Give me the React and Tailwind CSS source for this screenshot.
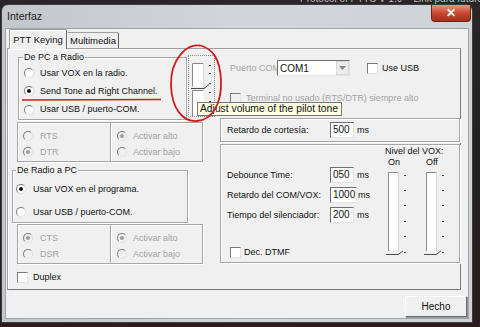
import React from "react";

const etched = "border border-[#a6a6a6] shadow-[inset_1px_1px_0_#ffffff,1px_1px_0_#ffffff]";

function Radio({ checked, disabled }) {
  return (
    <span
      className={
        "flex h-[10px] w-[10px] shrink-0 items-center justify-center rounded-full border border-b-[#e2e2e2] border-l-[#7d7d7d] border-r-[#e2e2e2] border-t-[#7d7d7d] " +
        (disabled ? "bg-[#f0f0f0]" : "bg-white")
      }
    >
      {checked ? (
        <span className={"h-[4px] w-[4px] rounded-full " + (disabled ? "bg-[#9d9d9d]" : "bg-[#111111]")} />
      ) : null}
    </span>
  );
}

function Check({ disabled }) {
  return (
    <span
      className={
        "block h-[11px] w-[11px] shrink-0 border border-b-[#e2e2e2] border-l-[#7a7a7a] border-r-[#e2e2e2] border-t-[#7a7a7a] " +
        (disabled ? "bg-[#f0f0f0]" : "bg-white")
      }
    />
  );
}

function Field({ value, w }) {
  return (
    <div
      className={
        "flex h-[16px] shrink-0 items-center border border-b-[#e3e3e3] border-l-[#6f6f6f] border-r-[#e3e3e3] border-t-[#6f6f6f] bg-white pl-[2px] text-[10px] leading-[12px] text-[#111111] " +
        (w === 27 ? "w-[27px]" : "w-[24px]")
      }
    >
      {value}
    </div>
  );
}

function SubBoxes({ a, b, aChecked }) {
  return (
    <div className="ml-[9px] flex">
      <div className={"flex h-[40px] w-[94px] flex-col pl-[5px] pt-[5px] " + etched}>
        <div className="flex h-[16px] items-center gap-[7px] text-[#a3a3a3]">
          <Radio disabled checked={aChecked === 0} />
          <span>{a}</span>
        </div>
        <div className="flex h-[16px] items-center gap-[7px] text-[#a3a3a3]">
          <Radio disabled checked={aChecked === 1} />
          <span>{b}</span>
        </div>
      </div>
      <div className={"-ml-[1px] flex h-[40px] w-[93px] flex-col pl-[6px] pt-[5px] " + etched}>
        <div className="flex h-[16px] items-center gap-[6px] text-[#a3a3a3]">
          <Radio disabled checked />
          <span>Activar alto</span>
        </div>
        <div className="flex h-[16px] items-center gap-[6px] text-[#a3a3a3]">
          <Radio disabled />
          <span>Activar bajo</span>
        </div>
      </div>
    </div>
  );
}

function PilotSlider() {
  return (
    <svg width="25" height="60" viewBox="0 0 25 60">
      <rect x="3.5" y="7.5" width="11" height="23" fill="#ffffff" />
      <path d="M3.5 30.5 V7.5 H14.5" stroke="#8a8a8a" fill="none" />
      <path d="M14.5 7.5 V30.5" stroke="#d4d4d4" fill="none" />
      <rect x="3.5" y="34.5" width="11" height="25" fill="#ffffff" />
      <path d="M3.5 60 V34.5 H14.5" stroke="#8a8a8a" fill="none" />
      <path d="M2 32.5 H15 L20 28.5" stroke="#4a4a4a" fill="none" />
      {[9, 17, 27, 36, 45, 54].map((y) => (
        <rect key={y} x="20" y={y} width="2" height="1" fill="#444444" />
      ))}
    </svg>
  );
}

function VoxSliders() {
  return (
    <svg width="64" height="90" viewBox="0 0 64 90">
      {[0, 38].map((o) => (
        <g key={o} transform={`translate(${o} 0)`}>
          <rect x="4.5" y="4.5" width="10" height="78" fill="#ffffff" />
          <path d="M4.5 83 V4.5 H14.5" stroke="#8c8c8c" fill="none" />
          <path d="M14.5 4.5 V83" stroke="#d4d4d4" fill="none" />
          <path d="M2 86.5 H14 L19 83" stroke="#4a4a4a" fill="none" />
          {[7, 22, 37, 53, 68, 84].map((y) => (
            <rect key={y} x="20" y={y} width="2" height="1" fill="#444444" />
          ))}
        </g>
      ))}
    </svg>
  );
}

export default function App() {
  return (
    <div className="relative h-[327px] w-[480px] overflow-hidden bg-gradient-to-b from-[#2a2526] via-[#222021] to-[#2c1c1c] font-['Liberation_Sans',Arial,sans-serif] text-[9px] leading-[11px] text-[#111111]">
      <div className="h-[4px] overflow-hidden pl-[300px]">
        <div className="-mt-[6px] whitespace-nowrap text-[10px] leading-[10px] text-[#bdbdbd]">
          Protocol of PTTS V 1.0&nbsp;&nbsp;&nbsp; Link para futuro/
        </div>
      </div>

      {/* window */}
      <div className="ml-[1px] flex w-[472px] flex-col rounded-t-[7px] border border-[#3a3d41] bg-gradient-to-r from-[#c3c7cb] via-[#d2d5d9] to-[#cfd3d7]">
        <div className="flex h-[23px] items-start justify-between">
          <span className="ml-[5px] mt-[5px] text-[10.5px] leading-[13px] text-[#1b1b1b]">Interfaz</span>
          <div className="mr-[1px] flex h-[17px] w-[40px] items-center justify-center rounded-b-[4px] border border-t-0 border-[#6b2419] bg-gradient-to-b from-[#e49580] via-[#c9472d] to-[#a3301d] text-[12px] font-bold leading-[12px] text-white">
            ✕
          </div>
        </div>

        {/* client */}
        <div className="mx-[3px] mb-[3px] flex h-[291px] flex-col border border-[#9ea4aa] bg-[#f0f0f0]">
          {/* tab strip */}
          <div className="relative z-10 flex h-[19px] items-end pl-[3px]">
            <div className="-mb-[1px] flex h-[20px] w-[58px] items-center justify-center rounded-t-[2px] border border-b-0 border-l-[#a0a0a0] border-r-[#5e5e5e] border-t-[#a0a0a0] bg-[#f0f0f0] pb-[1px] text-[9.5px] shadow-[inset_1px_1px_0_#ffffff]">
              PTT Keying
            </div>
            <div className="flex h-[16px] w-[52px] items-center justify-center rounded-t-[2px] border border-b-0 border-l-[#ffffff] border-r-[#5e5e5e] border-t-[#a0a0a0] text-[9.5px]">
              Multimedia
            </div>
          </div>

          {/* tab panel */}
          <div className="ml-[1px] flex h-[242px] w-[454px] border border-b-[#7a7a7a] border-l-[#a0a0a0] border-r-[#7a7a7a] border-t-[#a0a0a0] shadow-[inset_1px_1px_0_#ffffff]">
            {/* left column */}
            <div className="flex w-[212px] flex-col">
              <div className="flex items-start">
                <fieldset className={"ml-[10px] mt-[3px] h-[68px] w-[169px] " + etched}>
                  <legend className="ml-[4px] px-[1px] leading-[10px]">De PC a Radio</legend>
                  <div className="mt-[2px] flex flex-col pl-[5px]">
                    <div className="flex h-[18px] items-center gap-[6px]">
                      <Radio />
                      <span>Usar VOX en la radio.</span>
                    </div>
                    <div className="flex h-[18px] items-center gap-[6px]">
                      <Radio checked />
                      <span>Send Tone ad Right Channel.</span>
                    </div>
                    <div className="flex h-[19px] items-center gap-[6px]">
                      <Radio />
                      <span>Usar USB / puerto-COM.</span>
                    </div>
                  </div>
                </fieldset>
                <div className="ml-[1px] mt-[6px] h-[62px] w-[27px] border border-dotted border-[#8a8a8a]">
                  <PilotSlider />
                </div>
              </div>

              <div className="mt-[2px]">
                <SubBoxes a="RTS" b="DTR" aChecked={1} />
              </div>

              <fieldset className={"ml-[4px] mt-[3px] h-[58px] w-[176px] " + etched}>
                <legend className="ml-[3px] px-[1px] leading-[10px]">De Radio a PC</legend>
                <div className="mt-[5px] flex flex-col gap-[5px] pl-[3px]">
                  <div className="flex h-[18px] items-center gap-[7px]">
                    <Radio checked />
                    <span>Usar VOX en el programa.</span>
                  </div>
                  <div className="flex h-[18px] items-center gap-[7px]">
                    <Radio />
                    <span>Usar USB / puerto-COM.</span>
                  </div>
                </div>
              </fieldset>

              <div className="mt-[1px]">
                <SubBoxes a="CTS" b="DSR" aChecked={0} />
              </div>

              <div className="ml-[9px] mt-[8px] flex h-[11px] items-center gap-[5px]">
                <Check />
                <span>Duplex</span>
              </div>
            </div>

            {/* right column */}
            <div className="flex w-[240px] flex-col">
              <div className="mt-[11px] flex h-[16px] items-center">
                <span className="ml-[10px] w-[47px] whitespace-nowrap text-[#a3a3a3]">Puerto COM</span>
                <div className="relative flex h-[16px] w-[73px] items-center justify-between border border-b-[#e3e3e3] border-l-[#707070] border-r-[#e3e3e3] border-t-[#707070] bg-white pl-[2px] text-[10px]">
                  <span>COM1</span>
                  <div className="flex h-[14px] w-[13px] items-center justify-center border border-[#d8d8d8] bg-[#ececec]">
                    <svg width="7" height="4" viewBox="0 0 7 4">
                      <path d="M0 0 H7 L3.5 4 Z" fill="#8a8a8a" />
                    </svg>
                  </div>
                </div>
                <div className="ml-[17px]">
                  <Check />
                </div>
                <span className="ml-[4px]">Use USB</span>
              </div>

              <div className="ml-[10px] mt-[17px] flex h-[11px] items-center gap-[5px]">
                <Check disabled />
                <span className="whitespace-nowrap text-[#a3a3a3]">Terminal no usado (RTS/DTR) siempre alto</span>
              </div>

              <div className={"mt-[14px] flex h-[24px] items-center pl-[6px] " + etched}>
                <span className="w-[103px]">Retardo de cortesía:</span>
                <Field value="500" />
                <span className="ml-[3px]">ms</span>
              </div>

              <div className={"mt-[2px] flex h-[119px] " + etched}>
                <div className="flex w-[164px] flex-col pl-[6px] pt-[22px]">
                  <div className="flex h-[16px] items-center">
                    <span className="w-[103px]">Debounce Time:</span>
                    <Field value="050" />
                    <span className="ml-[3px]">ms</span>
                  </div>
                  <div className="mt-[4px] flex h-[16px] items-center">
                    <span className="w-[103px]">Retardo del COM/VOX:</span>
                    <Field value="1000" w={27} />
                    <span className="ml-[1px]">ms</span>
                  </div>
                  <div className="mt-[4px] flex h-[16px] items-center">
                    <span className="w-[103px]">Tiempo del silenciador:</span>
                    <Field value="200" />
                    <span className="ml-[3px]">ms</span>
                  </div>
                  <div className="ml-[3px] mt-[24px] flex h-[11px] items-center gap-[3px]">
                    <Check />
                    <span>Dec. DTMF</span>
                  </div>
                </div>
                <div className="flex flex-col">
                  <span className="mt-[1px] whitespace-nowrap leading-[11px]">Nivel del VOX:</span>
                  <div className="flex leading-[11px]">
                    <span className="ml-[3px] w-[38px]">On</span>
                    <span>Off</span>
                  </div>
                  <div className="-ml-[1px]">
                    <VoxSliders />
                  </div>
                </div>
              </div>
            </div>
          </div>

          {/* bottom button */}
          <div className="mr-[1px] mt-[6px] flex justify-end">
            <div className="flex h-[21px] w-[62px] items-center justify-center border border-b-[#6b6b6b] border-l-[#ffffff] border-r-[#6b6b6b] border-t-[#ffffff] bg-[#f0f0f0] text-[10px] shadow-[1px_1px_0_#9a9a9a]">
              Hecho
            </div>
          </div>
        </div>
      </div>

      {/* tooltip overlay */}
      <div className="absolute left-[197px] top-[102px] flex h-[14px] w-[145px] items-center whitespace-nowrap border border-[#767676] bg-[#ffffe1] pl-[2px] text-[10.3px] leading-[12px] text-[#111111]">
        Adjust volume of the pilot tone
      </div>

      {/* red annotations overlay */}
      <svg className="pointer-events-none absolute left-0 top-0" width="480" height="327" viewBox="0 0 480 327">
        <path
          d="M205 47 C187 40 170 60 171 86 C172 108 182 122 197 121 C212 120 222 104 221 80 C220 60 214 49 199 45"
          stroke="#d21c1c"
          strokeWidth="1.8"
          fill="none"
        />
        <path d="M22 100 L161 99.5" stroke="#d21c1c" strokeWidth="1.6" fill="none" />
      </svg>
    </div>
  );
}
